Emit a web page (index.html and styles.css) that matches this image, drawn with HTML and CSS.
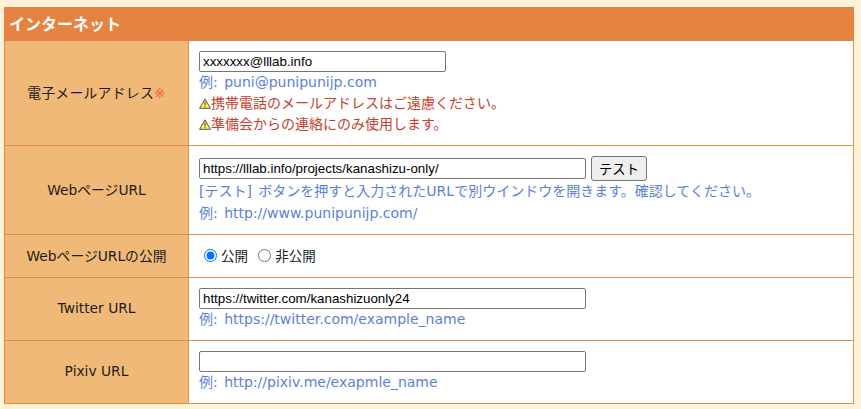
FILE: index.html
```html
<!DOCTYPE html>
<html lang="ja">
<head>
    <meta charset="UTF-8">
    <title>インターネット</title>
    <link rel="stylesheet" href="styles.css">
</head>
<body>
    <table class="form-table">
        <colgroup>
            <col class="col-label">
            <col>
        </colgroup>
        <tr class="row-head">
            <th colspan="2" class="section">インターネット</th>
        </tr>
        <tr class="row-email">
            <td class="label label-wide">電子メールアドレス<span class="required">※</span></td>
            <td class="field">
                <input type="text" class="input-short" value="xxxxxxx@lllab.info">
                <div class="hint">例: puni@punipunijp.com</div>
                <div class="warn"><svg class="warn-icon" viewBox="0 0 12 11"><path d="M6 .8 11.4 10.3H.6Z" fill="#fff35a" stroke="#444" stroke-width=".9" stroke-linejoin="round"/><path d="M6 3.6V7M6 7.9V9.2" stroke="#333" stroke-width="1"/></svg>携帯電話のメールアドレスはご遠慮ください。</div>
                <div class="warn"><svg class="warn-icon" viewBox="0 0 12 11"><path d="M6 .8 11.4 10.3H.6Z" fill="#fff35a" stroke="#444" stroke-width=".9" stroke-linejoin="round"/><path d="M6 3.6V7M6 7.9V9.2" stroke="#333" stroke-width="1"/></svg>準備会からの連絡にのみ使用します。</div>
            </td>
        </tr>
        <tr class="row-web">
            <td class="label">WebページURL</td>
            <td class="field">
                <div class="input-line">
                    <input type="text" class="input-long" value="https://lllab.info/projects/kanashizu-only/">
                    <button class="btn" type="button">テスト</button>
                </div>
                <div class="hint">[テスト] ボタンを押すと入力されたURLで別ウインドウを開きます。確認してください。</div>
                <div class="hint">例: http://www.punipunijp.com/</div>
            </td>
        </tr>
        <tr class="row-public">
            <td class="label">WebページURLの公開</td>
            <td class="field field-middle">
                <label class="radio"><input type="radio" name="pub" checked>公開</label>
                <label class="radio"><input type="radio" name="pub">非公開</label>
            </td>
        </tr>
        <tr class="row-url">
            <td class="label">Twitter URL</td>
            <td class="field">
                <input type="text" class="input-long" value="https://twitter.com/kanashizuonly24">
                <div class="hint">例: https://twitter.com/example_name</div>
            </td>
        </tr>
        <tr class="row-url">
            <td class="label">Pixiv URL</td>
            <td class="field">
                <input type="text" class="input-long">
                <div class="hint">例: http://pixiv.me/exapmle_name</div>
            </td>
        </tr>
    </table>
</body>
</html>
```

FILE: styles.css
```css
body {
    margin: 0;
    padding: 7px 7px 6px 4px;
    background: #fef3d8;
    font-family: "DejaVu Sans", "Noto Sans CJK JP", sans-serif;
    font-size: 13px;
    color: #1c1c1c;
}
.form-table {
    width: 850px;
    border-collapse: collapse;
    table-layout: fixed;
}
.col-label { width: 184px; }
.row-head { height: 33px; }
.section {
    padding: 0 4px 2px;
    background: #e58342;
    border: 1px solid #e58342;
    color: #fff;
    font-size: 16px;
    font-weight: bold;
    text-align: left;
}
.label {
    padding: 0 0 2px;
    background: #f1b977;
    border: 1px solid #e38d4c;
    text-align: center;
    font-size: 13.8px;
}
.label-wide {
    letter-spacing: 0.3px;
}
.required {
    color: #f0643c;
}
.field {
    padding: 10px 10px 0;
    background: #fff;
    border: 1px solid #e0924f;
    vertical-align: top;
}
.field-middle {
    padding: 0 10px 2px;
    vertical-align: middle;
}
.row-email { height: 105px; }
.row-web { height: 89px; }
.row-public { height: 43px; }
.row-url { height: 63px; }
input[type="text"] {
    box-sizing: border-box;
    height: 21px;
    padding: 1px 3px;
    border: 1px solid #767676;
    border-radius: 2px;
    font-family: "Liberation Sans", Arial, sans-serif;
    font-size: 13.33px;
    display: block;
}
.input-short { width: 247px; }
.input-long { width: 387px; }
.input-line {
    display: flex;
    align-items: center;
    gap: 5px;
}
.btn {
    width: 56px;
    height: 25px;
    padding: 0;
    background: #efefef;
    border: 1px solid #767676;
    border-radius: 3px;
    font-family: "Noto Sans CJK JP", sans-serif;
    font-size: 13.33px;
    color: #000;
}
.hint {
    color: #5b7fdc;
    font-size: 14px;
    line-height: 20px;
    word-spacing: 2px;
    white-space: nowrap;
}
.hint + .hint {
    margin-top: 2px;
}
.warn {
    color: #c8402c;
    font-size: 14px;
    line-height: 21px;
    display: flex;
    align-items: center;
}
.hint + .warn {
    margin-top: 1px;
}
.warn-icon {
    width: 12px;
    height: 11px;
}
.radio {
    margin-right: 1px;
    display: inline-flex;
    align-items: center;
    font-size: 13.5px;
}
.radio input {
    margin: 0 4px 0 5px;
}
```
